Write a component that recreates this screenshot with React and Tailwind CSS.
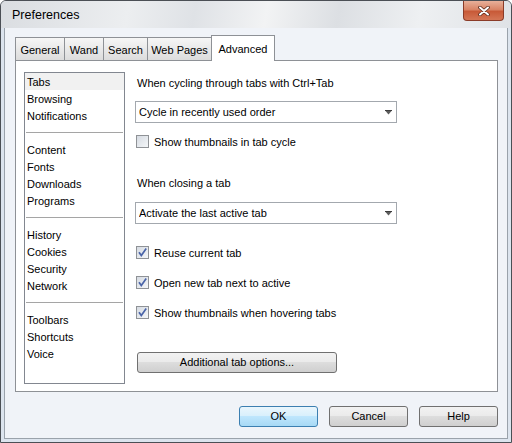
import React from 'react';

const FONT = { fontFamily: '"Liberation Sans", Arial, sans-serif' };

const groups = [
  ['Tabs', 'Browsing', 'Notifications'],
  ['Content', 'Fonts', 'Downloads', 'Programs'],
  ['History', 'Cookies', 'Security', 'Network'],
  ['Toolbars', 'Shortcuts', 'Voice'],
];

const tabs = [
  { label: 'General', w: 'w-[50px]' },
  { label: 'Wand', w: 'w-[40px]' },
  { label: 'Search', w: 'w-[45px]' },
  { label: 'Web Pages', w: 'w-[65px]' },
];

function Select({ value }) {
  return (
    <div className="flex h-[22px] w-[262px] items-center border border-[#a3a8ae] bg-white pl-[3px] pr-[4px]">
      <span className="flex-1 truncate pt-px">{value}</span>
      <svg width="7" height="5" viewBox="0 0 7 5">
        <rect x="0" y="0" width="7" height="1" fill="#3c3c3c" />
        <polygon points="0.5,1 6.5,1 3.5,4.5" fill="#5c5c5c" />
      </svg>
    </div>
  );
}

function Checkbox({ checked, label, className = '' }) {
  return (
    <div className={`flex h-[17px] items-center ${className}`}>
      <div className="ml-[1px] flex h-[13px] w-[13px] items-center justify-center border border-[#8f9296] bg-[linear-gradient(135deg,#d6dbe2,#f4f6f8)]">
        {checked && (
          <svg width="11" height="11" viewBox="0 0 11 11">
            <path d="M2 5.2 L4.3 8.6 L9.2 1.6" fill="none" stroke="#4a64a8" strokeWidth="1.7" />
          </svg>
        )}
      </div>
      <span className="ml-[5px] pt-px">{label}</span>
    </div>
  );
}

function Button({ children, primary, className = '' }) {
  return (
    <button
      className={`flex h-[21px] items-center justify-center rounded-[3px] border text-[11px] text-black ${
        primary
          ? 'border-[#3c7fb1] bg-[linear-gradient(180deg,#eaf6fd_0%,#d9f0fc_45%,#bee6fd_50%,#a7d9f5_100%)]'
          : 'border-[#707070] bg-[linear-gradient(180deg,#f2f2f2_0%,#ebebeb_45%,#dddddd_50%,#cfcfcf_100%)]'
      } ${className}`}
    >
      {children}
    </button>
  );
}

export default function App() {
  return (
    <div className="h-[443px] w-[512px] bg-white text-[11px] text-black" style={FONT}>
      <div className="flex h-[443px] w-[512px] flex-col overflow-hidden rounded-t-[6px] border border-[#4b4f55] bg-[#dce4ee]">
        {/* title bar */}
        <div className="flex h-[27px] shrink-0 items-start bg-[linear-gradient(100deg,#dadde1_0%,#eceef0_25%,#dfe2e6_38%,#f2f3f4_52%,#dcdfe3_66%,#eef0f2_82%,#dfe2e6_100%)]">
          <span className="ml-[11px] mt-[7px] text-[12.5px] leading-[15px]">Preferences</span>
          <div className="ml-auto mr-[7px] flex h-[20px] w-[41px] items-center justify-center rounded-b-[4px] border border-t-0 border-[#8a3b28] bg-[linear-gradient(180deg,#e8b09a_0%,#d98466_45%,#c85a38_55%,#d47656_100%)]">
            <svg width="12" height="10" viewBox="0 0 12 10">
              <path d="M2 1.5 L10 8.5 M10 1.5 L2 8.5" stroke="#5a2a1c" strokeWidth="3.6" strokeLinecap="round" />
              <path d="M2 1.5 L10 8.5 M10 1.5 L2 8.5" stroke="#ffffff" strokeWidth="2" strokeLinecap="round" />
            </svg>
          </div>
        </div>

        {/* client */}
        <div className="mx-[3px] mb-[3px] flex flex-1 flex-col border-x border-b border-[#9aa2ab] bg-[#f0f3f8] pl-[10px] pr-[9px] pt-[7px]">
          {/* tab strip */}
          <div className="relative z-10 -mb-px flex h-[26px] items-end">
            {tabs.map((t) => (
              <div
                key={t.label}
                className={`${t.w} mb-px -mr-px flex h-[23px] items-center justify-center border border-b-0 border-[#8e9196] bg-[linear-gradient(180deg,#f6f6f6,#dcdcdc)] pt-[2px]`}
              >
                {t.label}
              </div>
            ))}
            <div className="flex h-[26px] w-[64px] items-center justify-center border border-b-0 border-[#8e9196] bg-white pt-[1px]">
              Advanced
            </div>
          </div>

          {/* panel */}
          <div className="flex h-[332px] border border-[#8e9196] bg-white pb-[7px] pl-[8px] pt-[11px]">
            <div className="flex w-[101px] flex-col border border-[#828790] bg-white">
              {groups.map((g, gi) => (
                <div key={gi}>
                  {gi > 0 && (
                    <div className="flex h-[17px] items-center px-[1px]">
                      <div className="h-px w-full bg-[#a5a5a5]" />
                    </div>
                  )}
                  {g.map((item) => (
                    <div
                      key={item}
                      className={`flex h-[17px] items-center pl-[2px] pt-[2px] ${item === 'Tabs' ? 'bg-[#f1f1f1]' : ''}`}
                    >
                      {item}
                    </div>
                  ))}
                </div>
              ))}
            </div>

            <div className="ml-[10px] flex flex-col">
              <div className="flex h-[22px] items-center pl-[2px] pt-px">When cycling through tabs with Ctrl+Tab</div>
              <div className="mt-[7px]">
                <Select value="Cycle in recently used order" />
              </div>
              <Checkbox className="mt-[10px]" label="Show thumbnails in tab cycle" />

              <div className="mt-[22px] flex h-[22px] items-center pl-[2px] pt-px">When closing a tab</div>
              <div className="mt-[8px]">
                <Select value="Activate the last active tab" />
              </div>
              <Checkbox checked className="mt-[20px]" label="Reuse current tab" />
              <Checkbox checked className="mt-[13px]" label="Open new tab next to active" />
              <Checkbox checked className="mt-[13px]" label="Show thumbnails when hovering tabs" />

              <Button className="ml-[2px] mt-[31px] w-[200px]">Additional tab options...</Button>
            </div>
          </div>

          {/* dialog buttons */}
          <div className="mt-[14px] flex justify-end gap-[11px]">
            <Button primary className="w-[79px]">OK</Button>
            <Button className="w-[79px]">Cancel</Button>
            <Button className="w-[79px]">Help</Button>
          </div>
        </div>
      </div>
    </div>
  );
}
